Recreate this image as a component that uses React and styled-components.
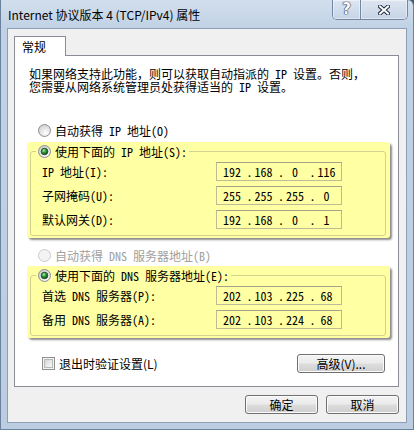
import React from 'react';
import styled, { createGlobalStyle } from 'styled-components';

const UI = `"Noto Sans CJK SC", "Noto Sans", sans-serif`;
const SONG = `"Noto Sans Mono CJK SC", "Noto Sans CJK SC", monospace`;
const YELLOW = '#ffffa3';

const GlobalStyle = createGlobalStyle`
  html, body { margin: 0; padding: 0; background: #3d5a7c; }
  body { width: 414px; height: 430px; overflow: hidden; }
  * { box-sizing: border-box; }
`;

const Window = styled.div`
  width: 414px;
  height: 430px;
  display: flex;
  flex-direction: column;
  background: linear-gradient(#d2deec 0px, #c1d2e6 28px, #bccde2 100%);
  border: 1px solid #6b829f;
  border-top: none;
  border-top-right-radius: 6px;
  padding: 0 6px 6px 6px;
`;

const TitleBar = styled.div`
  height: 29px;
  display: flex;
  align-items: flex-start;
`;

const TitleText = styled.div`
  margin: 7px 0 0 1px;
  font: 12px/16px ${UI};
  color: #000;
  white-space: nowrap;
`;

const CaptionButtons = styled.div`
  margin-left: auto;
  margin-right: -1px;
  display: flex;
  height: 20px;
  border: 1px solid #73869f;
  border-top: none;
  border-radius: 0 0 5px 5px;
  overflow: hidden;
`;

const CaptionButton = styled.div`
  width: ${p => p.$w}px;
  height: 100%;
  display: flex;
  align-items: center;
  justify-content: center;
  background: linear-gradient(#dde6f1, #c6d4e6);
  box-shadow: inset 0 0 0 1px rgba(255, 255, 255, 0.45);
  border-right: ${p => (p.$divider ? '1px solid #73869f' : 'none')};
  font: bold 15px/1 "DejaVu Sans", sans-serif;
  color: #fff;
  text-shadow: 0 0 1px #1d2a3a, 0 0 1px #1d2a3a, 0 0 1px #1d2a3a;
`;

const Client = styled.div`
  flex: 1;
  display: flex;
  flex-direction: column;
  border: 1px solid #8c9fb7;
  background: #f0f0f0;
  padding: 7px 7px 8px 6px;
`;

const TabStrip = styled.div`
  display: flex;
  height: 20px;
`;

const Tab = styled.div`
  width: 52px;
  height: 20px;
  background: #fff;
  border: 1px solid #898c95;
  border-bottom: none;
  padding: 2px 0 0 7px;
  font: 12px/15px ${UI};
  color: #000;
`;

const TabFiller = styled.div`
  flex: 1;
  border-bottom: 1px solid #898c95;
`;

const Panel = styled.div`
  height: 331px;
  background: #fff;
  border: 1px solid #898c95;
  border-top: none;
  padding: 11px 8px 0 12px;
  display: flex;
  flex-direction: column;
`;

const Intro = styled.p`
  margin: 0 0 0 2px;
  font: 12px/13px ${SONG};
  color: #000;
  white-space: nowrap;
`;

const OptionRow = styled.div`
  display: flex;
  align-items: center;
  gap: 4px;
  height: 13px;
  margin: ${p => p.$mt}px 0 0 11px;
  font: 12px/13px ${SONG};
  color: ${p => (p.$disabled ? '#a0a0a0' : '#000')};
  white-space: nowrap;
`;

const Highlight = styled.div`
  width: 363px;
  margin-top: ${p => p.$mt}px;
  padding: 9px 4px 2px 3px;
  background: ${YELLOW};
  border-radius: 3px;
  box-shadow: 2px 2px 2px rgba(0, 0, 0, 0.45);
`;

const GroupBox = styled.div`
  border: 1px solid #d2d190;
  border-radius: 3px;
  padding: 0 0 6px 0;
  display: flex;
  flex-direction: column;
`;

const Legend = styled.div`
  align-self: flex-start;
  display: flex;
  align-items: center;
  gap: 4px;
  height: 13px;
  margin: -7px 0 0 5px;
  padding: 0 2px;
  background: ${YELLOW};
  font: 12px/13px ${SONG};
  color: #000;
  white-space: nowrap;
`;

const FieldGrid = styled.div`
  display: grid;
  grid-template-columns: 174px 126px;
  grid-auto-rows: 19px;
  row-gap: 5px;
  align-items: center;
  margin: 4px 0 0 11px;
`;

const FieldLabel = styled.div`
  font: 12px/13px ${SONG};
  color: #000;
  white-space: nowrap;
`;

const IpBox = styled.div`
  height: 19px;
  display: flex;
  align-items: center;
  padding-left: 4px;
  border: 1px solid #bdbc96;
  border-top-color: #a4a389;
  font: 12px/13px ${SONG};
  color: #000;
`;

const Octet = styled.span`
  width: 22px;
  text-align: center;
`;

const Dot = styled.span`
  width: 9.5px;
  text-align: right;
`;

const FooterRow = styled.div`
  display: flex;
  align-items: center;
  height: 19px;
  margin: 16px 5px 0 15px;
`;

const CheckLabel = styled.label`
  display: flex;
  align-items: center;
  gap: 4px;
  font: 12px/15px ${UI};
  color: #000;
  white-space: nowrap;
`;

const Button = styled.div`
  width: ${p => p.$w}px;
  height: 19px;
  margin-left: ${p => (p.$push ? 'auto' : '0')};
  display: flex;
  align-items: center;
  justify-content: center;
  border: 1px solid #707070;
  border-radius: 3px;
  background: linear-gradient(#f3f3f3 0%, #ebebeb 48%, #dddddd 52%, #cfcfcf 100%);
  box-shadow: inset 0 0 0 1px #fbfbfb;
  font: 12px/15px ${UI};
  color: #000;
  white-space: nowrap;
`;

const DialogButtons = styled.div`
  display: flex;
  justify-content: flex-end;
  gap: 8px;
  margin-top: 8px;
`;

const Radio = ({ checked, disabled }) => (
  <svg width="13" height="13" viewBox="0 0 13 13" style={{ flex: 'none' }}>
    <defs>
      <radialGradient id="rFill" cx="0.6" cy="0.7" r="0.7">
        <stop offset="0" stopColor="#ffffff" />
        <stop offset="1" stopColor="#cfcfcf" />
      </radialGradient>
      <radialGradient id="rDot" cx="0.4" cy="0.35" r="0.7">
        <stop offset="0" stopColor="#a8f5a0" />
        <stop offset="0.45" stopColor="#2f9a3c" />
        <stop offset="1" stopColor="#0d421a" />
      </radialGradient>
    </defs>
    <circle
      cx="6.5"
      cy="6.5"
      r="6"
      fill={disabled ? '#f3f3f3' : 'url(#rFill)'}
      stroke={disabled ? '#c9c9c9' : '#8d8f91'}
    />
    {checked && <circle cx="6.5" cy="6.5" r="3.3" fill="url(#rDot)" stroke="#1f3f24" strokeWidth="0.8" />}
  </svg>
);

const Checkbox = () => (
  <svg width="13" height="13" viewBox="0 0 13 13" style={{ flex: 'none' }}>
    <defs>
      <linearGradient id="cbFill" x1="0" y1="0" x2="1" y2="1">
        <stop offset="0" stopColor="#d2d2d2" />
        <stop offset="1" stopColor="#fbfbfb" />
      </linearGradient>
    </defs>
    <rect x="0.5" y="0.5" width="12" height="12" fill="#f4f4f4" stroke="#8f8f8f" />
    <rect x="2.5" y="2.5" width="8" height="8" fill="url(#cbFill)" stroke="#b8b8b8" />
  </svg>
);

const CloseGlyph = () => (
  <svg width="12" height="10" viewBox="0 0 12 10">
    <path d="M2 1.5 L10 8.5 M10 1.5 L2 8.5" stroke="#1f2c3d" strokeWidth="4" strokeLinecap="square" />
    <path d="M2 1.5 L10 8.5 M10 1.5 L2 8.5" stroke="#ffffff" strokeWidth="2" strokeLinecap="square" />
  </svg>
);

const IpField = ({ value }) => {
  const parts = value.split('.');
  return (
    <IpBox>
      {parts.map((p, i) => (
        <React.Fragment key={i}>
          {i > 0 && <Dot>.</Dot>}
          <Octet>{p}</Octet>
        </React.Fragment>
      ))}
    </IpBox>
  );
};

const ipRows = [
  ['IP 地址(I):', '192.168.0.116'],
  ['子网掩码(U):', '255.255.255.0'],
  ['默认网关(D):', '192.168.0.1'],
];

const dnsRows = [
  ['首选 DNS 服务器(P):', '202.103.225.68'],
  ['备用 DNS 服务器(A):', '202.103.224.68'],
];

export default function App() {
  return (
    <>
      <GlobalStyle />
      <Window>
        <TitleBar>
          <TitleText>Internet 协议版本 4 (TCP/IPv4) 属性</TitleText>
          <CaptionButtons>
            <CaptionButton $w={28} $divider>?</CaptionButton>
            <CaptionButton $w={46}>
              <CloseGlyph />
            </CaptionButton>
          </CaptionButtons>
        </TitleBar>
        <Client>
          <TabStrip>
            <Tab>常规</Tab>
            <TabFiller />
          </TabStrip>
          <Panel>
            <Intro>
              如果网络支持此功能，则可以获取自动指派的 IP 设置。否则，
              <br />
              您需要从网络系统管理员处获得适当的 IP 设置。
            </Intro>
            <OptionRow $mt={31}>
              <Radio />
              <span>自动获得 IP 地址(O)</span>
            </OptionRow>
            <Highlight $mt={5}>
              <GroupBox>
                <Legend>
                  <Radio checked />
                  <span>使用下面的 IP 地址(S):</span>
                </Legend>
                <FieldGrid>
                  {ipRows.map(([label, ip]) => (
                    <React.Fragment key={label}>
                      <FieldLabel>{label}</FieldLabel>
                      <IpField value={ip} />
                    </React.Fragment>
                  ))}
                </FieldGrid>
              </GroupBox>
            </Highlight>
            <OptionRow $mt={11} $disabled>
              <Radio disabled />
              <span>自动获得 DNS 服务器地址(B)</span>
            </OptionRow>
            <Highlight $mt={4}>
              <GroupBox>
                <Legend>
                  <Radio checked />
                  <span>使用下面的 DNS 服务器地址(E):</span>
                </Legend>
                <FieldGrid>
                  {dnsRows.map(([label, ip]) => (
                    <React.Fragment key={label}>
                      <FieldLabel>{label}</FieldLabel>
                      <IpField value={ip} />
                    </React.Fragment>
                  ))}
                </FieldGrid>
              </GroupBox>
            </Highlight>
            <FooterRow>
              <CheckLabel>
                <Checkbox />
                <span>退出时验证设置(L)</span>
              </CheckLabel>
              <Button $w={88} $push>高级(V)...</Button>
            </FooterRow>
          </Panel>
          <DialogButtons>
            <Button $w={73}>确定</Button>
            <Button $w={73}>取消</Button>
          </DialogButtons>
        </Client>
      </Window>
    </>
  );
}
